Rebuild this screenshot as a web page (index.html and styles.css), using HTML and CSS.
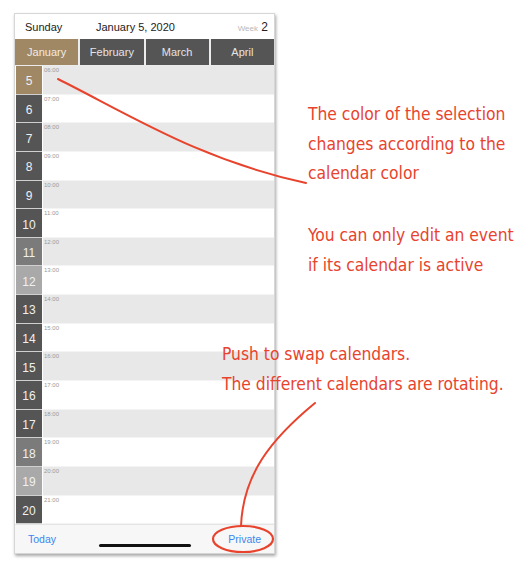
FILE: index.html
```html
<!DOCTYPE html>
<html>
<head>
<meta charset="utf-8">
<link rel="stylesheet" href="styles.css">
</head>
<body>
<div class="canvas">
  <div class="phone">
    <div class="header">
      <span class="day-name">Sunday</span>
      <span class="date">January 5, 2020</span>
      <span class="week"><span class="week-label">Week</span> <b>2</b></span>
    </div>
    <div class="tabs">
      <div class="tab active">January</div>
      <div class="tab">February</div>
      <div class="tab">March</div>
      <div class="tab">April</div>
    </div>
    <div class="grid">
      <div class="day sel">5</div><div class="slot alt"><span>06:00</span></div>
      <div class="day">6</div><div class="slot"><span>07:00</span></div>
      <div class="day">7</div><div class="slot alt"><span>08:00</span></div>
      <div class="day">8</div><div class="slot"><span>09:00</span></div>
      <div class="day">9</div><div class="slot alt"><span>10:00</span></div>
      <div class="day">10</div><div class="slot"><span>11:00</span></div>
      <div class="day mid">11</div><div class="slot alt"><span>12:00</span></div>
      <div class="day light">12</div><div class="slot"><span>13:00</span></div>
      <div class="day">13</div><div class="slot alt"><span>14:00</span></div>
      <div class="day">14</div><div class="slot"><span>15:00</span></div>
      <div class="day">15</div><div class="slot alt"><span>16:00</span></div>
      <div class="day">16</div><div class="slot"><span>17:00</span></div>
      <div class="day">17</div><div class="slot alt"><span>18:00</span></div>
      <div class="day mid">18</div><div class="slot"><span>19:00</span></div>
      <div class="day light">19</div><div class="slot alt"><span>20:00</span></div>
      <div class="day">20</div><div class="slot"><span>21:00</span></div>
    </div>
    <div class="bottom">
      <span class="link">Today</span>
      <span class="home-bar"></span>
      <span class="link">Private</span>
    </div>
  </div>

  <p class="note note-1">The color of the selection<br>changes according to the<br>calendar color</p>
  <p class="note note-2">You can only edit an event<br>if its calendar is active</p>
  <p class="note note-3">Push to swap calendars.<br>The different calendars are rotating.</p>

  <svg class="arrows" width="515" height="568" viewBox="0 0 515 568">
    <path d="M58 79 C 130 115, 200 160, 306 183" fill="none" stroke="#e8432d" stroke-width="2" stroke-linecap="round"/>
    <path d="M315 403 C 270 440, 243 475, 241 526" fill="none" stroke="#e8432d" stroke-width="2" stroke-linecap="round"/>
    <ellipse cx="243" cy="539" rx="30" ry="13" fill="none" stroke="#e8432d" stroke-width="2.2"/>
  </svg>
</div>
</body>
</html>
```

FILE: styles.css
```css
* { box-sizing: border-box; }
html, body { margin: 0; padding: 0; background: #ffffff; }
body { font-family: "Liberation Sans", Arial, sans-serif; }

.canvas {
  position: relative;
  width: 515px;
  height: 568px;
  padding: 13px 0 0 14px;
}

.phone {
  width: 261px;
  height: 541px;
  background: #fff;
  border: 1px solid #d6d6d6;
  box-shadow: 1px 2px 3px rgba(0,0,0,0.35);
  display: flex;
  flex-direction: column;
}

.header {
  height: 25px;
  display: flex;
  align-items: center;
  padding: 0 6px 0 10px;
  font-size: 11px;
  color: #222;
}
.day-name { width: 71px; }
.date { flex: 1; }
.week { font-size: 12px; color: #222; }
.week-label { font-size: 8px; color: #b8b8b8; }
.week b { font-weight: normal; }

.tabs {
  height: 27px;
  display: flex;
  gap: 2px;
  padding-bottom: 1px;
  background: #ececec;
}
.tab {
  flex: 1;
  background: #555555;
  color: #e4e4e4;
  font-size: 11px;
  display: flex;
  align-items: center;
  justify-content: center;
}
.tab.active { background: #a08865; color: #f1ebe3; }

.grid {
  display: grid;
  grid-template-columns: 27px 1fr;
  grid-auto-rows: 28.65px;
  background: #fff;
}
.day {
  background: #555555;
  color: #f0f0f0;
  font-size: 12px;
  display: flex;
  align-items: center;
  justify-content: center;
  padding-top: 3px;
  border-bottom: 1px solid #d0d0d0;
  margin-left: 1px;
}
.day.sel { background: #a08865; }
.day.mid { background: #7b7b7b; }
.day.light { background: #a9a9a9; }
.slot {
  background: #fff;
  margin-left: 1px;
  border-bottom: 1px solid #f4f4f4;
}
.slot.alt { background: #e8e8e8; }
.slot span {
  display: block;
  font-size: 6px;
  color: #9a9a9a;
  padding: 1px 0 0 1px;
}

.bottom {
  flex: 1;
  display: flex;
  align-items: center;
  justify-content: space-between;
  padding: 0 13px 0 13px;
  background: #f7f7f7;
  border-top: 1px solid #e4e4e4;
  position: relative;
}
.link { color: #3a86f0; font-size: 10.5px; }
.home-bar {
  position: absolute;
  left: 84px;
  top: 19px;
  width: 92px;
  height: 3px;
  border-radius: 2px;
  background: #111;
}

.note {
  position: absolute;
  margin: 0;
  color: #e8432d;
  font-family: "DejaVu Sans Condensed", "DejaVu Sans", sans-serif;
  font-size: 17.3px;
  line-height: 29.5px;
  white-space: nowrap;
}
.note-1 { left: 308px; top: 100px; }
.note-2 { left: 308px; top: 221px; }
.note-3 { left: 222px; top: 340px; }

.arrows {
  position: absolute;
  left: 0;
  top: 0;
  pointer-events: none;
}
```
